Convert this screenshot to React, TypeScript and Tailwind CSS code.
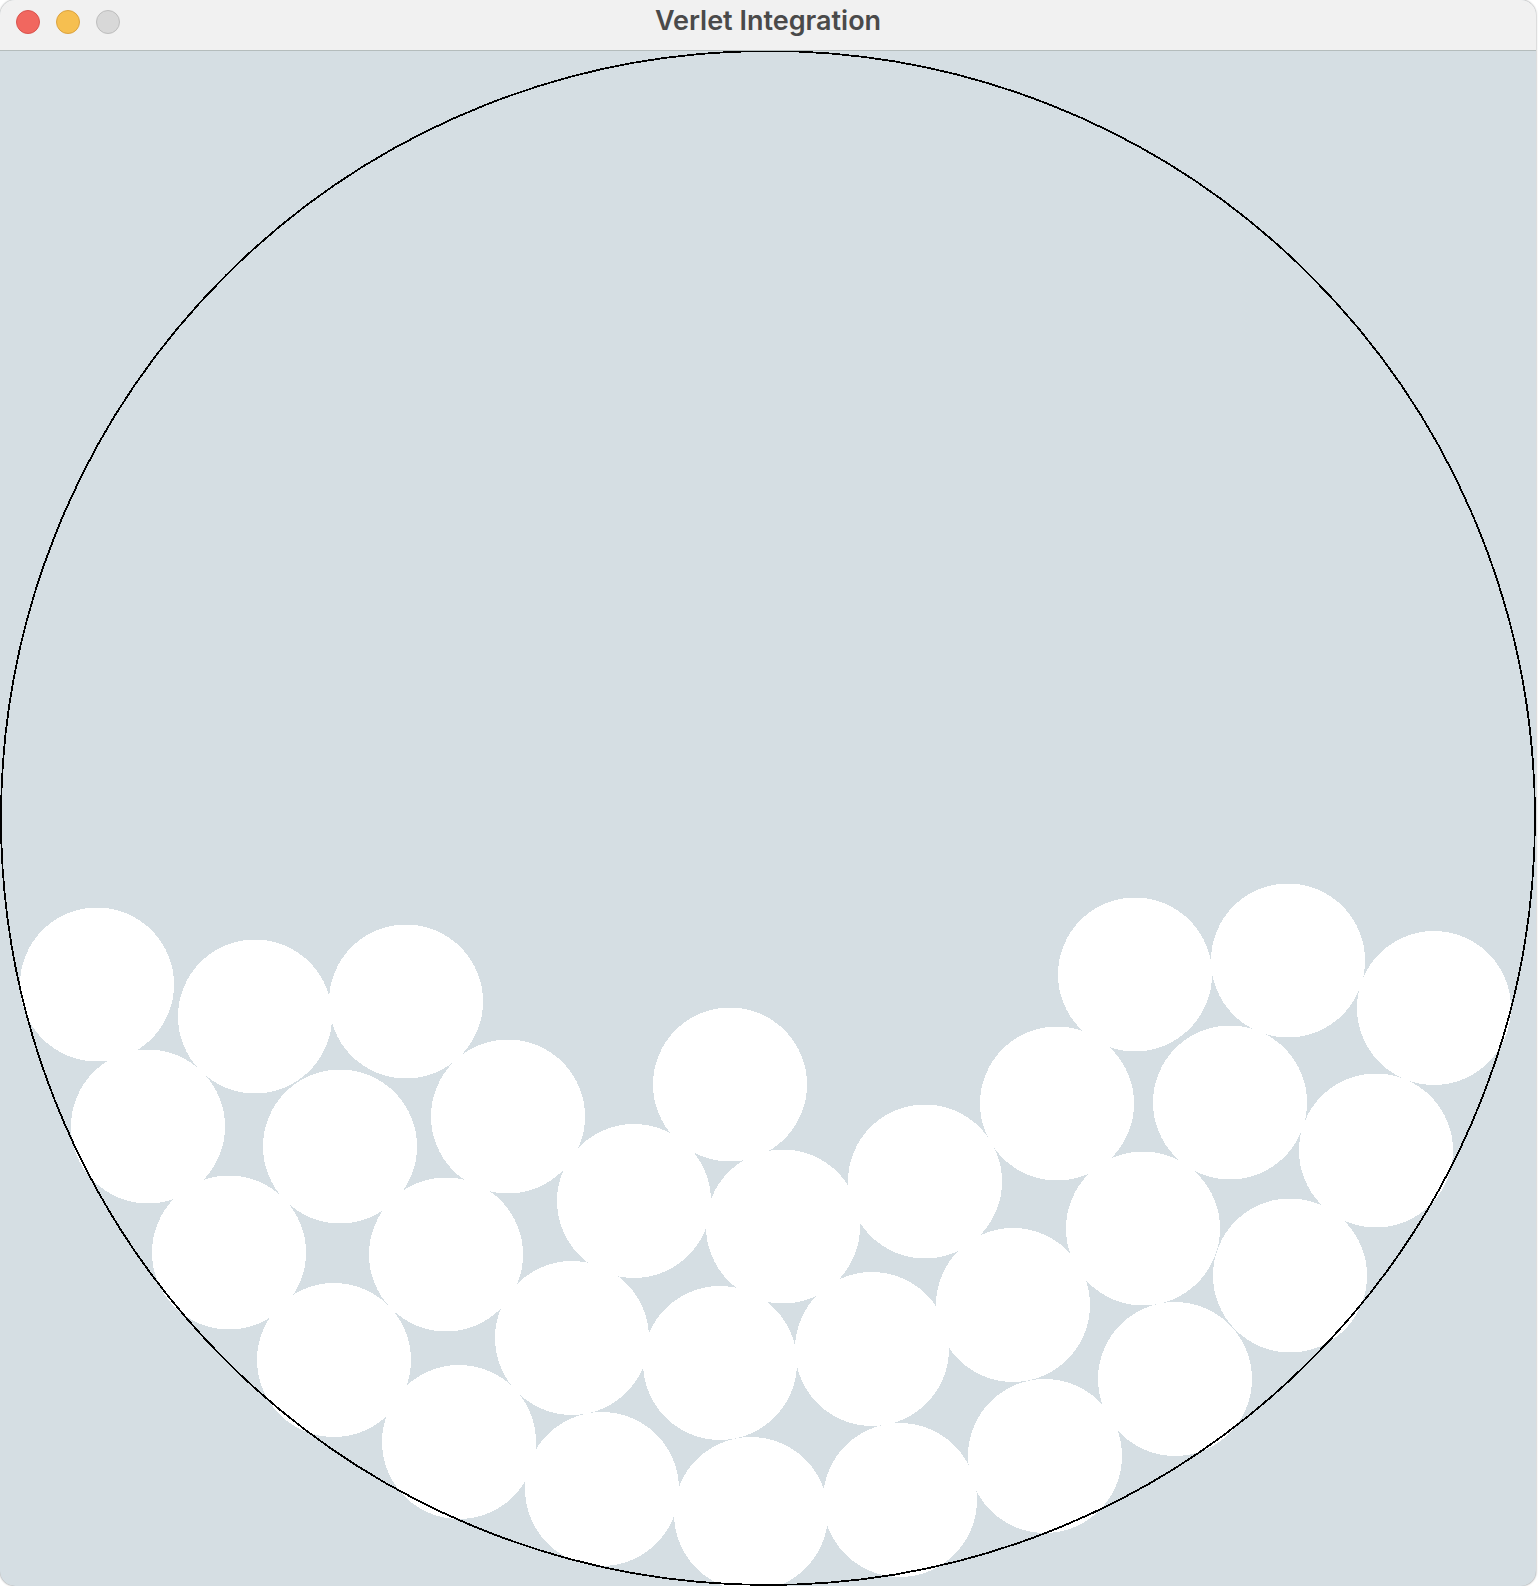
const balls: [number, number][] = [
  [97, 984.5], [255, 1016.5], [406, 1001.5], [148, 1126.5], [340, 1146.5], [508, 1116.5],
  [730, 1084.5], [634, 1201], [783, 1226.5], [925, 1181.5], [1057, 1103.5], [1135, 974.5],
  [1288, 960.5], [1434, 1008], [1230, 1102.5], [1376, 1150.5], [1143, 1228.5], [1290, 1275.5],
  [229, 1252.5], [446, 1254.5], [334, 1360], [572, 1338], [720, 1363], [872, 1349],
  [1013, 1305], [1175, 1379], [459, 1442], [602, 1489], [751, 1514], [900, 1500],
  [1045, 1456],
];

const TrafficLight = ({ className }: { className: string }) => (
  <div className={`h-6 w-6 rounded-full border ${className}`} />
);

export default function App() {
  return (
    <div className="h-[1586px] w-[1538px] bg-white font-['Inter',sans-serif]">
      <div className="flex h-full w-[1536px] flex-col overflow-hidden rounded-[15px] bg-[#d5dee3] shadow-[0_0_2px_rgba(0,0,0,0.5)]">
        <div className="relative flex h-[51px] shrink-0 items-center gap-4 border-b border-[#b4bcbc] bg-[#f1f1f1] pb-[6px] pl-4">
          <TrafficLight className="border-[#d9534d] bg-[#f1675f]" />
          <TrafficLight className="border-[#dba23f] bg-[#f6bf50]" />
          <TrafficLight className="border-[#bdbdbd] bg-[#d8d8d8]" />
          <span className="absolute inset-x-0 top-[5px] text-center text-[27px] leading-[32px] font-semibold text-[#4a4a4a]">
            Verlet Integration
          </span>
        </div>
        {/* ring is painted last, it sits over the balls */}
        <svg className="block flex-1 overflow-visible" viewBox="0 51 1536 1535" shapeRendering="crispEdges">
          {balls.map(([cx, cy]) => (
            <circle key={`${cx}-${cy}`} cx={cx} cy={cy} r="77" fill="#fff" />
          ))}
          <circle cx="768" cy="818" r="767" fill="none" stroke="#000" strokeWidth="1.8" />
        </svg>
      </div>
    </div>
  );
}
